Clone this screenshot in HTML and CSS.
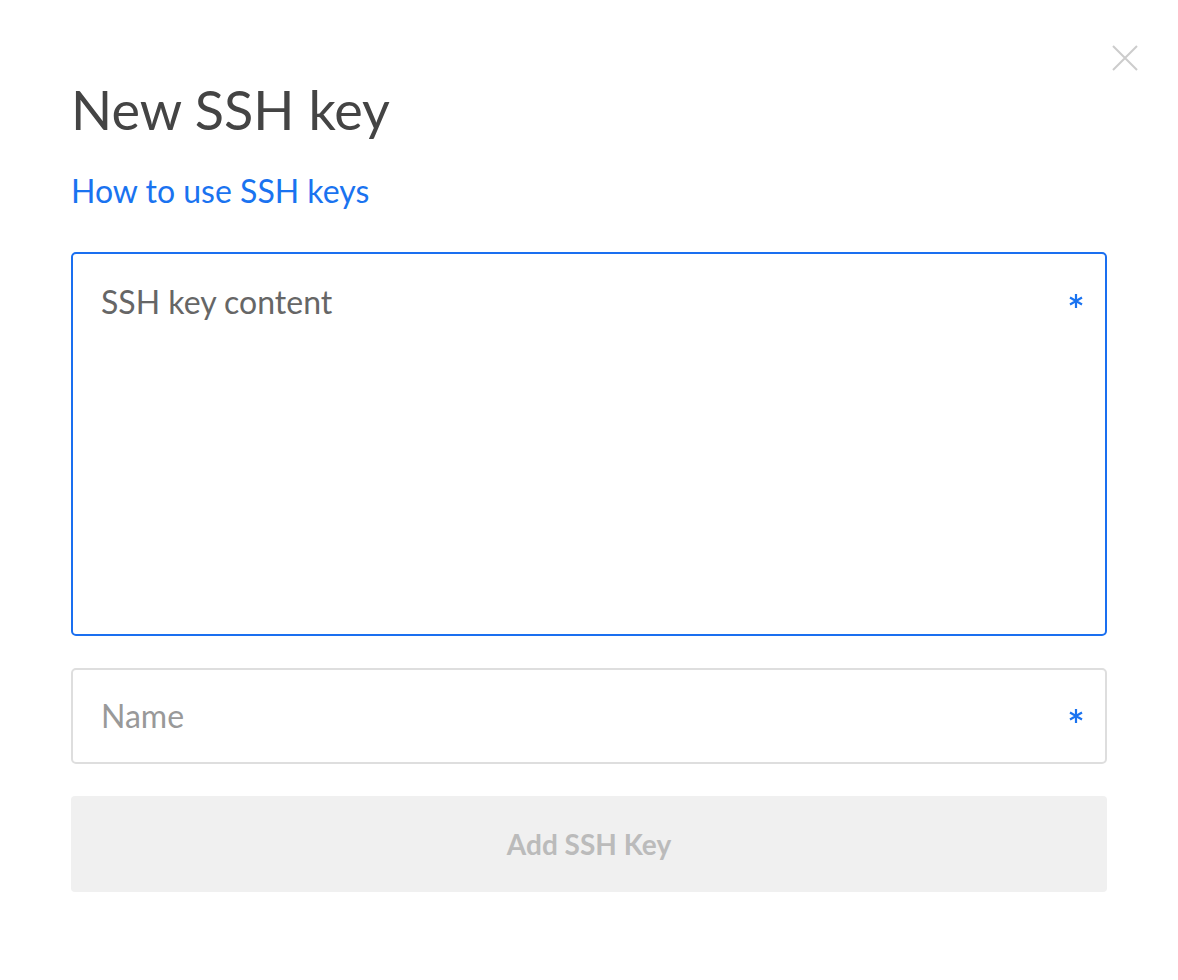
FILE: index.html
```html
<!DOCTYPE html>
<html>
<head>
<meta charset="utf-8">
<link rel="stylesheet" href="styles.css">
</head>
<body>
<div class="modal">
  <button class="close" aria-label="Close">
    <svg width="28" height="28" viewBox="0 0 28 28"><path d="M2 2 L26 26 M26 2 L2 26" stroke="#cccccc" stroke-width="2" fill="none"/></svg>
  </button>
  <h1 class="title">New SSH key</h1>
  <a class="help" href="#">How to use SSH keys</a>
  <form class="form">
    <div class="field field-area">
      <span class="placeholder dark">SSH key content</span>
      <svg class="req" width="14" height="16" viewBox="0 0 14 16"><path d="M7 1 V15 M1 4.5 L13 11.5 M13 4.5 L1 11.5" stroke="#1a73f0" stroke-width="2.2" fill="none"/></svg>
    </div>
    <div class="field field-input">
      <span class="placeholder">Name</span>
      <svg class="req" width="14" height="16" viewBox="0 0 14 16"><path d="M7 1 V15 M1 4.5 L13 11.5 M13 4.5 L1 11.5" stroke="#1a73f0" stroke-width="2.2" fill="none"/></svg>
    </div>
    <button class="submit" type="button">Add SSH Key</button>
  </form>
</div>
</body>
</html>
```
FILE: styles.css
```css
html, body {
  margin: 0;
  padding: 0;
  background: #ffffff;
}
body {
  font-family: Lato, "Open Sans", sans-serif;
  width: 1178px;
  height: 980px;
}
.modal {
  position: relative;
  padding: 80px 71px 0 71px;
}
.close {
  position: absolute;
  top: 44px;
  right: 39px;
  background: none;
  border: 0;
  padding: 0;
  width: 28px;
  height: 28px;
  cursor: pointer;
}
.close svg { display: block; }
.title {
  margin: 0;
  font-size: 54px;
  font-weight: 400;
  color: #444444;
  line-height: 60px;
}
.help {
  display: inline-block;
  margin-top: 32px;
  font-size: 32px;
  line-height: 38px;
  color: #1a73f0;
  text-decoration: none;
}
.form {
  margin-top: 42px;
  display: flex;
  flex-direction: column;
  gap: 32px;
}
.field {
  display: flex;
  justify-content: space-between;
  box-sizing: border-box;
  border-radius: 5px;
  padding: 0 22px 0 28px;
}
.field-area {
  height: 384px;
  border: 2px solid #1a6ff0;
  align-items: flex-start;
  padding-top: 28px;
}
.field-area .req { margin-top: 11px; }
.field-input {
  height: 96px;
  border: 2px solid #dedede;
  align-items: center;
}
.placeholder {
  font-size: 32px;
  line-height: 40px;
  color: #999999;
}
.placeholder.dark { color: #666666; }
.req { display: block; }
.submit {
  height: 96px;
  border: 0;
  border-radius: 4px;
  background: #f0f0f0;
  color: #bbbbbb;
  font-family: Lato, "Open Sans", sans-serif;
  font-size: 28px;
  font-weight: 700;
}
```
